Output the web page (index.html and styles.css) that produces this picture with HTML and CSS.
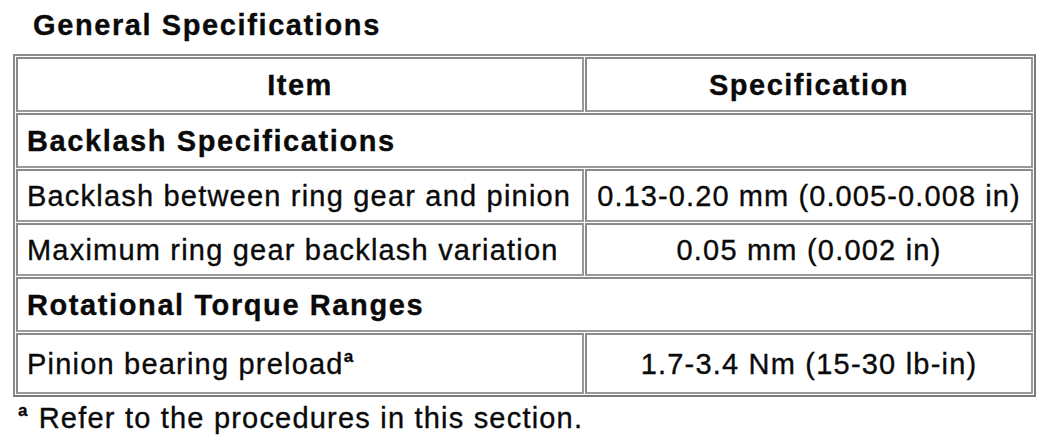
FILE: index.html
```html
<!DOCTYPE html>
<html>
<head>
<meta charset="utf-8">
<link rel="stylesheet" href="styles.css">
</head>
<body>
<div class="page">
  <div class="title">General Specifications</div>
  <table class="spec">
    <colgroup>
      <col class="col-item">
      <col class="col-spec">
    </colgroup>
    <tr class="head">
      <th>Item</th>
      <th>Specification</th>
    </tr>
    <tr class="group">
      <td colspan="2">Backlash Specifications</td>
    </tr>
    <tr>
      <td class="left">Backlash between ring gear and pinion</td>
      <td class="right fill">0.13-0.20 mm (0.005-0.008 in)</td>
    </tr>
    <tr>
      <td class="left">Maximum ring gear backlash variation</td>
      <td class="right">0.05 mm (0.002 in)</td>
    </tr>
    <tr class="group">
      <td colspan="2">Rotational Torque Ranges</td>
    </tr>
    <tr class="tall">
      <td class="left">Pinion bearing preload<sup>a</sup></td>
      <td class="right">1.7-3.4 Nm (15-30 lb-in)</td>
    </tr>
  </table>
  <div class="note"><sup>a</sup> Refer to the procedures in this section.</div>
</div>
</body>
</html>
```

FILE: styles.css
```css
html, body {
  margin: 0;
  padding: 0;
  background: #ffffff;
}

.page {
  width: 1050px;
  height: 440px;
  overflow: hidden;
  font-family: "Liberation Sans", Arial, sans-serif;
  color: #0a0a0a;
  -webkit-text-stroke: 0.35px #0a0a0a;
}

.title {
  font-weight: bold;
  font-size: 29px;
  letter-spacing: 1.6px;
  line-height: 34px;
  padding: 8px 0 0 33px;
  height: 46px;
}

.spec {
  margin-left: 13px;
  width: 1023px;
  table-layout: fixed;
  border-collapse: separate;
  border-spacing: 1px;
  border: 2px solid #8c8c8c;
  border-right-color: #7a7a7a;
  border-bottom-color: #7a7a7a;
  font-size: 29px;
}

.col-item { width: 568px; }
.col-spec { width: auto; }

.spec th,
.spec td {
  border: 2px solid #9a9a9a;
  border-top-color: #8a8a8a;
  border-left-color: #8a8a8a;
  height: 50px;
  padding: 0 8px;
  line-height: 34px;
  box-sizing: border-box;
  vertical-align: middle;
}

.spec th {
  font-weight: bold;
  letter-spacing: 1.5px;
  text-align: center;
  height: 55px;
}

.spec tr.group td {
  font-weight: bold;
  letter-spacing: 1.6px;
  text-align: left;
  padding-left: 9px;
  height: 55px;
}

.spec td.left {
  text-align: left;
  letter-spacing: 1.2px;
  padding-left: 9px;
  white-space: nowrap;
  height: 53px;
}

.spec td.right {
  text-align: center;
  letter-spacing: 1.2px;
  white-space: nowrap;
  height: 53px;
}

.spec td.fill {
  letter-spacing: 1.1px;
}

.spec tr.tall td {
  height: 61px;
}

sup {
  font-size: 17px;
  line-height: 0;
  vertical-align: 12px;
  letter-spacing: 0;
  font-weight: bold;
}

.note {
  font-size: 29px;
  letter-spacing: 1.2px;
  line-height: 34px;
  padding: 4px 0 0 18px;
}

.note sup {
  margin-right: 2px;
}
```
